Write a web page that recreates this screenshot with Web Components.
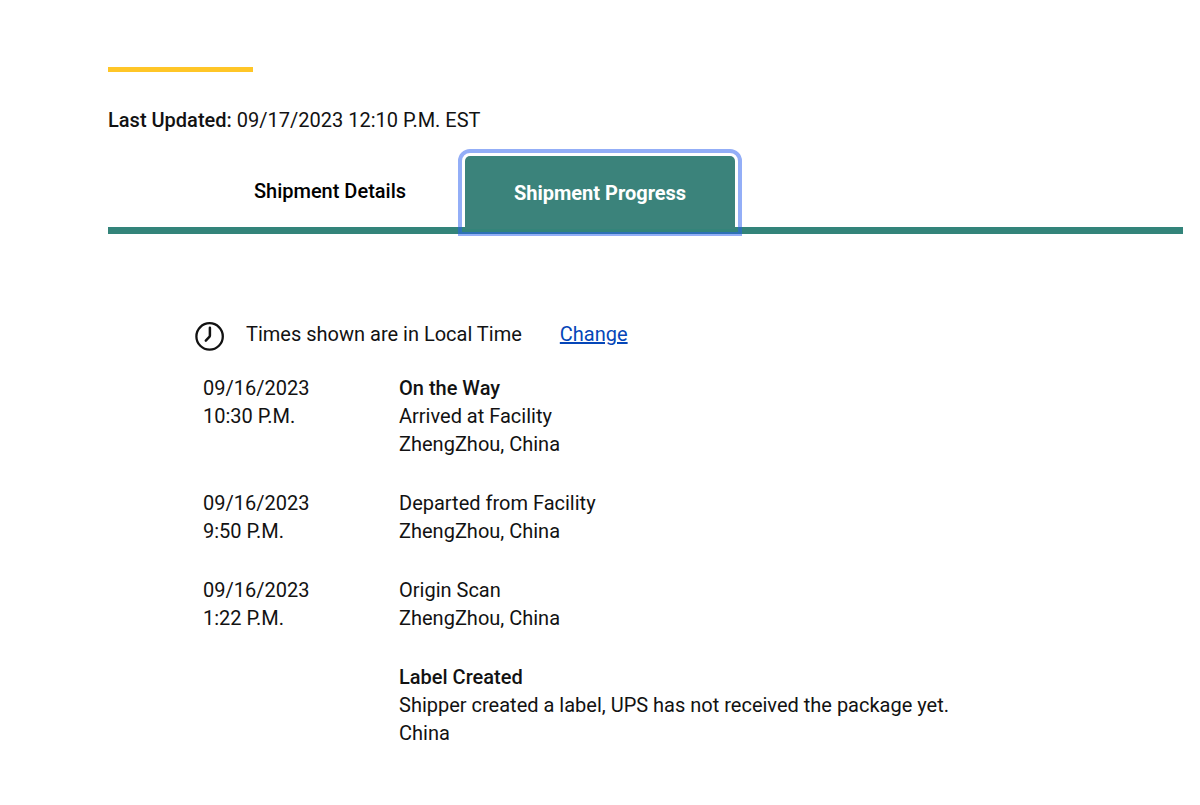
<!DOCTYPE html>
<html lang="en">
<head>
<meta charset="utf-8">
<meta name="viewport" content="width=device-width, initial-scale=1">
<title>Shipment Progress</title>
<style>
body { margin: 0; background: #fff; color: #121212; font: 20px/28px Roboto, "Liberation Sans", sans-serif; }
</style>
</head>
<body>
<tracking-page>
  <last-updated label="Last Updated:">09/17/2023 12:10 P.M. EST</last-updated>
  <shipment-tabs></shipment-tabs>
  <time-notice>Times shown are in Local Time</time-notice>
  <progress-table></progress-table>
</tracking-page>
<script>
const define = (name, html, setup) => customElements.define(name, class extends HTMLElement {
  constructor() {
    super();
    this.attachShadow({ mode: "open" }).innerHTML = html;
  }
  connectedCallback() { if (setup) setup(this, this.shadowRoot); }
});

define("tracking-page", `
<style>
:host { display: block; padding: 67px 17px 40px 108px; }
.accent { width: 145px; height: 5px; background: #ffc627; }
main { display: flex; flex-direction: column; }
</style>
<div class="accent"></div>
<main><slot></slot></main>`);

define("last-updated", `
<style>
:host { display: block; margin-top: 34px; }
strong { font-weight: 500; }
</style>
<strong></strong> <slot></slot>`, (el, root) => {
  root.querySelector("strong").textContent = el.getAttribute("label");
});

define("shipment-tabs", `
<style>
:host { display: block; margin-top: 20px; }
.tabs { display: flex; align-items: flex-end; padding-left: 87px; border-bottom: 7px solid #33847a; }
button { border: 0; margin: 0; padding: 0; width: 270px; height: 73px; background: none; color: #000;
  font: 500 20px/28px Roboto, "Liberation Sans", sans-serif; cursor: pointer; }
button[aria-selected="true"] { margin-bottom: -2px; background: #3b837b; color: #fff; font-weight: 700; border-radius: 5px 5px 0 0;
  outline: 4px solid rgba(39, 94, 239, .5); outline-offset: 3px; }
</style>
<div class="tabs" role="tablist">
  <button role="tab" aria-selected="false">Shipment Details</button>
  <button role="tab" aria-selected="true">Shipment Progress</button>
</div>`, (el, root) => {
  const tabs = [...root.querySelectorAll("button")];
  tabs.forEach(tab => tab.addEventListener("click", () =>
    tabs.forEach(t => t.setAttribute("aria-selected", String(t === tab)))));
});

define("time-notice", `
<style>
:host { display: flex; align-items: flex-start; margin: 86px 0 0 86px; }
svg { width: 32px; height: 32px; flex: none; margin-right: 20px; }
a { margin-left: 38px; color: #0546b8; text-decoration: underline; }
</style>
<svg viewBox="0 0 32 32" fill="none" stroke="#121212" aria-hidden="true">
  <circle cx="15.6" cy="16.4" r="13.2" stroke-width="2.3"/>
  <path d="M15.9 7.7V15.6Q15.9 16.5 15.3 17L11.8 20.6" stroke-width="2.5" stroke-linecap="round"/>
</svg>
<span><slot></slot></span>
<a href="#change">Change</a>`);

define("progress-table", `
<style>
:host { display: block; margin: 22px 0 0 95px; }
table { border-collapse: collapse; width: 100%; table-layout: fixed; }
td { padding: 0 0 31px; vertical-align: top; }
td:first-child { width: 196px; }
td div { min-height: 28px; }
strong { font-weight: 500; }
</style>
<table aria-label="Shipment progress"><tbody>
  <tr>
    <td><div>09/16/2023</div><div>10:30 P.M.</div></td>
    <td><div><strong>On the Way</strong></div><div>Arrived at Facility</div><div>ZhengZhou, China</div></td>
  </tr>
  <tr>
    <td><div>09/16/2023</div><div>9:50 P.M.</div></td>
    <td><div>Departed from Facility</div><div>ZhengZhou, China</div></td>
  </tr>
  <tr>
    <td><div>09/16/2023</div><div>1:22 P.M.</div></td>
    <td><div>Origin Scan</div><div>ZhengZhou, China</div></td>
  </tr>
  <tr>
    <td></td>
    <td><div><strong>Label Created</strong></div><div>Shipper created a label, UPS has not received the package yet.</div><div>China</div></td>
  </tr>
</tbody></table>`);
</script>
</body>
</html>
